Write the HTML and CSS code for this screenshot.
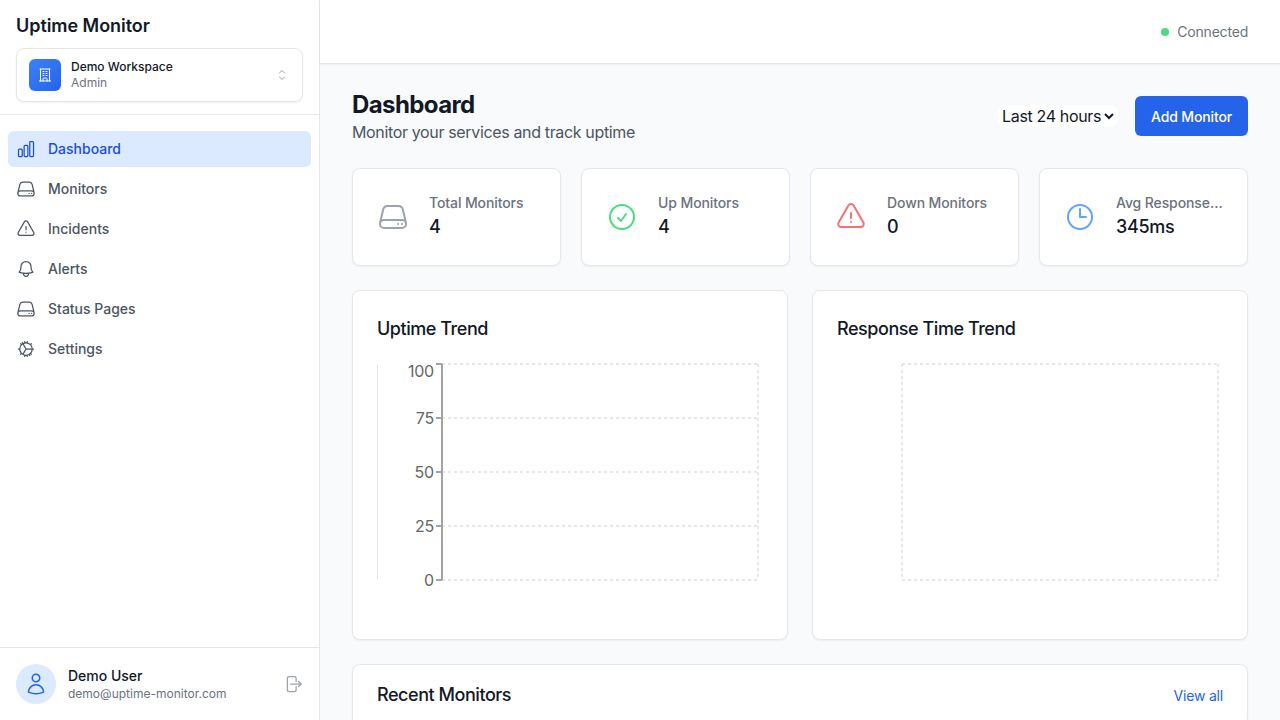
FILE: index.html
```html
<!DOCTYPE html>
<html lang="en">
<head>
    <meta charset="utf-8">
    <title>Uptime Monitor</title>
    <link rel="stylesheet" href="styles.css">
</head>
<body>

    <aside class="sidebar">
        <div class="brand">
            <h1>Uptime Monitor</h1>
            <div class="workspace">
                <span class="workspace-logo">
                    <svg class="icon-sm" viewBox="0 0 24 24"><path d="M3.75 21h16.5M4.5 3h15M5.25 3v18m13.5-18v18M9 6.75h1.5m-1.5 3h1.5m-1.5 3h1.5m3-6H15m-1.5 3H15m-1.5 3H15M9 21v-3.375c0-.621.504-1.125 1.125-1.125h3.75c.621 0 1.125.504 1.125 1.125V21"/></svg>
                </span>
                <div class="workspace-text">
                    <strong>Demo Workspace</strong>
                    <span>Admin</span>
                </div>
                <svg class="chevrons" viewBox="0 0 24 24"><path d="M8.25 15L12 18.75 15.75 15m-7.5-6L12 5.25 15.75 9"/></svg>
            </div>
        </div>

        <nav class="nav">
            <a class="nav-item active" href="#">
                <svg class="icon" viewBox="0 0 24 24"><path d="M3 13.125C3 12.504 3.504 12 4.125 12h2.25c.621 0 1.125.504 1.125 1.125v6.75C7.5 20.496 6.996 21 6.375 21h-2.25A1.125 1.125 0 013 19.875v-6.75zM9.75 8.625c0-.621.504-1.125 1.125-1.125h2.25c.621 0 1.125.504 1.125 1.125v11.25c0 .621-.504 1.125-1.125 1.125h-2.25a1.125 1.125 0 01-1.125-1.125V8.625zM16.5 4.125c0-.621.504-1.125 1.125-1.125h2.25C20.496 3 21 3.504 21 4.125v15.75c0 .621-.504 1.125-1.125 1.125h-2.25a1.125 1.125 0 01-1.125-1.125V4.125z"/></svg>
                Dashboard
            </a>
            <a class="nav-item" href="#">
                <svg class="icon" viewBox="0 0 24 24"><path d="M21.75 17.25v-.228a4.5 4.5 0 00-.12-1.03l-2.268-9.64a3.375 3.375 0 00-3.285-2.602H7.923a3.375 3.375 0 00-3.285 2.602l-2.268 9.64a4.5 4.5 0 00-.12 1.03v.228m19.5 0a3 3 0 01-3 3H5.25a3 3 0 01-3-3m19.5 0a3 3 0 00-3-3H5.25a3 3 0 00-3 3m16.5 0h.008v.008h-.008v-.008zm-3 0h.008v.008h-.008v-.008z"/></svg>
                Monitors
            </a>
            <a class="nav-item" href="#">
                <svg class="icon" viewBox="0 0 24 24"><path d="M12 9v3.75m-9.303 3.376c-.866 1.5.217 3.374 1.948 3.374h14.71c1.73 0 2.813-1.874 1.948-3.374L13.949 3.378c-.866-1.5-3.032-1.5-3.898 0L2.697 16.126zM12 15.75h.007v.008H12v-.008z"/></svg>
                Incidents
            </a>
            <a class="nav-item" href="#">
                <svg class="icon" viewBox="0 0 24 24"><path d="M14.857 17.082a23.848 23.848 0 005.454-1.31A8.967 8.967 0 0118 9.75v-.7V9A6 6 0 006 9v.75a8.967 8.967 0 01-2.312 6.022c1.733.64 3.56 1.085 5.455 1.31m5.714 0a24.255 24.255 0 01-5.714 0m5.714 0a3 3 0 11-5.714 0"/></svg>
                Alerts
            </a>
            <a class="nav-item" href="#">
                <svg class="icon" viewBox="0 0 24 24"><path d="M21.75 17.25v-.228a4.5 4.5 0 00-.12-1.03l-2.268-9.64a3.375 3.375 0 00-3.285-2.602H7.923a3.375 3.375 0 00-3.285 2.602l-2.268 9.64a4.5 4.5 0 00-.12 1.03v.228m19.5 0a3 3 0 01-3 3H5.25a3 3 0 01-3-3m19.5 0a3 3 0 00-3-3H5.25a3 3 0 00-3 3m16.5 0h.008v.008h-.008v-.008zm-3 0h.008v.008h-.008v-.008z"/></svg>
                Status Pages
            </a>
            <a class="nav-item" href="#">
                <svg class="icon" viewBox="0 0 24 24"><path d="M4.5 12a7.5 7.5 0 0015 0m-15 0a7.5 7.5 0 1115 0m-15 0H3m16.5 0H21m-9 0l-3.75-6.495M12 12l-3.75 6.495M12 12h7.5M7.5 4.205l.75 1.3m7.5 12.99l.75 1.3M5.636 5.636l1.06 1.06m10.607 10.607l1.06 1.06m-12.727 0l1.06-1.06M17.303 6.697l1.06-1.06M10.438 3.137l.26 1.477m2.604 14.772l.26 1.477m0-17.726l-.26 1.477m-2.604 14.772l-.26 1.477"/></svg>
                Settings
            </a>
        </nav>

        <div class="user">
            <span class="avatar">
                <svg class="icon-md" viewBox="0 0 24 24"><path d="M15.75 6a3.75 3.75 0 11-7.5 0 3.75 3.75 0 017.5 0zM4.501 20.118a7.5 7.5 0 0114.998 0A17.933 17.933 0 0112 21.75c-2.676 0-5.216-.584-7.499-1.632z"/></svg>
            </span>
            <div class="user-text">
                <strong>Demo User</strong>
                <span>demo@uptime-monitor.com</span>
            </div>
            <svg class="icon logout" viewBox="0 0 24 24"><path d="M15.75 9V5.25A2.25 2.25 0 0013.5 3h-6a2.25 2.25 0 00-2.25 2.25v13.5A2.25 2.25 0 007.5 21h6a2.25 2.25 0 002.25-2.25V15m3 0l3-3m0 0l-3-3m3 3H9"/></svg>
        </div>
    </aside>

    <div class="content">
        <header class="topbar">
            <span class="dot"></span>
            <span>Connected</span>
        </header>

        <main class="main">
            <div class="page-head">
                <div>
                    <h2>Dashboard</h2>
                    <p>Monitor your services and track uptime</p>
                </div>
                <div class="page-actions">
                    <select class="range">
                        <option>Last 24 hours</option>
                        <option>Last 7 days</option>
                        <option>Last 30 days</option>
                    </select>
                    <button class="primary">Add Monitor</button>
                </div>
            </div>

            <section class="stats">
                <div class="card stat">
                    <svg class="stat-icon gray" viewBox="0 0 24 24"><path d="M21.75 17.25v-.228a4.5 4.5 0 00-.12-1.03l-2.268-9.64a3.375 3.375 0 00-3.285-2.602H7.923a3.375 3.375 0 00-3.285 2.602l-2.268 9.64a4.5 4.5 0 00-.12 1.03v.228m19.5 0a3 3 0 01-3 3H5.25a3 3 0 01-3-3m19.5 0a3 3 0 00-3-3H5.25a3 3 0 00-3 3m16.5 0h.008v.008h-.008v-.008zm-3 0h.008v.008h-.008v-.008z"/></svg>
                    <div class="stat-text">
                        <span class="stat-label">Total Monitors</span>
                        <span class="stat-value">4</span>
                    </div>
                </div>
                <div class="card stat">
                    <svg class="stat-icon green" viewBox="0 0 24 24"><path d="M9 12.75L11.25 15 15 9.75M21 12a9 9 0 11-18 0 9 9 0 0118 0z"/></svg>
                    <div class="stat-text">
                        <span class="stat-label">Up Monitors</span>
                        <span class="stat-value">4</span>
                    </div>
                </div>
                <div class="card stat">
                    <svg class="stat-icon red" viewBox="0 0 24 24"><path d="M12 9v3.75m-9.303 3.376c-.866 1.5.217 3.374 1.948 3.374h14.71c1.73 0 2.813-1.874 1.948-3.374L13.949 3.378c-.866-1.5-3.032-1.5-3.898 0L2.697 16.126zM12 15.75h.007v.008H12v-.008z"/></svg>
                    <div class="stat-text">
                        <span class="stat-label">Down Monitors</span>
                        <span class="stat-value">0</span>
                    </div>
                </div>
                <div class="card stat">
                    <svg class="stat-icon blue" viewBox="0 0 24 24"><path d="M12 6v6h4.5m4.5 0a9 9 0 11-18 0 9 9 0 0118 0z"/></svg>
                    <div class="stat-text">
                        <span class="stat-label">Avg Response Time</span>
                        <span class="stat-value">345ms</span>
                    </div>
                </div>
            </section>

            <section class="charts">
                <div class="card chart-card">
                    <h3>Uptime Trend</h3>
                    <svg class="chart" viewBox="0 0 386 256">
                        <line class="edge" x1="0.5" y1="5" x2="0.5" y2="221"/>
                        <g class="grid">
                            <line x1="65" y1="5" x2="381" y2="5"/>
                            <line x1="65" y1="59" x2="381" y2="59"/>
                            <line x1="65" y1="113" x2="381" y2="113"/>
                            <line x1="65" y1="167" x2="381" y2="167"/>
                            <line x1="65" y1="221" x2="381" y2="221"/>
                            <line x1="65" y1="5" x2="65" y2="221"/>
                            <line x1="381" y1="5" x2="381" y2="221"/>
                        </g>
                        <g class="axis">
                            <line x1="65" y1="5" x2="65" y2="221"/>
                            <line x1="59" y1="5" x2="65" y2="5"/>
                            <line x1="59" y1="59" x2="65" y2="59"/>
                            <line x1="59" y1="113" x2="65" y2="113"/>
                            <line x1="59" y1="167" x2="65" y2="167"/>
                            <line x1="59" y1="221" x2="65" y2="221"/>
                        </g>
                        <g class="ticks">
                            <text x="57" y="18">100</text>
                            <text x="57" y="65">75</text>
                            <text x="57" y="119">50</text>
                            <text x="57" y="173">25</text>
                            <text x="57" y="227">0</text>
                        </g>
                    </svg>
                </div>
                <div class="card chart-card">
                    <h3>Response Time Trend</h3>
                    <svg class="chart" viewBox="0 0 386 256">
                        <g class="grid">
                            <line x1="65" y1="5" x2="381" y2="5"/>
                            <line x1="65" y1="221" x2="381" y2="221"/>
                            <line x1="65" y1="5" x2="65" y2="221"/>
                            <line x1="381" y1="5" x2="381" y2="221"/>
                        </g>
                    </svg>
                </div>
            </section>

            <section class="card recent">
                <div class="recent-head">
                    <h3>Recent Monitors</h3>
                    <a href="#">View all</a>
                </div>
            </section>
        </main>
    </div>

</body>
</html>
```

FILE: styles.css
```css
* {
    box-sizing: border-box;
}

body {
    margin: 0;
    height: 100vh;
    display: flex;
    overflow: hidden;
    font-family: Inter, "Liberation Sans", sans-serif;
    color: #111827;
    background-color: #f9fafb;
}

svg {
    fill: none;
    stroke: currentColor;
    stroke-width: 1.5;
    stroke-linecap: round;
    stroke-linejoin: round;
    flex-shrink: 0;
}

h1, h2, h3, p {
    margin: 0;
}

a {
    text-decoration: none;
}

.icon {
    width: 20px;
    height: 20px;
}

.icon-sm {
    width: 16px;
    height: 16px;
}

.icon-md {
    width: 24px;
    height: 24px;
}

/* sidebar */
.sidebar {
    width: 320px;
    flex-shrink: 0;
    display: flex;
    flex-direction: column;
    background-color: #fff;
    border-right: 1px solid #e5e7eb;
}

.brand {
    padding: 12px 16px;
    border-bottom: 1px solid #e5e7eb;
}

.brand h1 {
    font-size: 18px;
    line-height: 28px;
    font-weight: 600;
    margin-bottom: 8px;
    letter-spacing: -0.05px;
}

.workspace {
    display: flex;
    align-items: center;
    gap: 10px;
    padding: 10px 12px;
    background-color: #fff;
    border: 1px solid #e5e7eb;
    border-radius: 8px;
    box-shadow: 0 1px 2px rgba(0, 0, 0, 0.05);
}

.workspace-logo {
    width: 32px;
    height: 32px;
    display: flex;
    align-items: center;
    justify-content: center;
    border-radius: 6px;
    color: #fff;
    background: linear-gradient(135deg, #3b82f6, #2563eb);
}

.workspace-text {
    flex: 1;
    display: flex;
    flex-direction: column;
    font-size: 12px;
    line-height: 16px;
}

.workspace-text strong {
    font-weight: 500;
}

.workspace-text span {
    color: #6b7280;
}

.chevrons {
    width: 16px;
    height: 16px;
    color: #9ca3af;
}

.nav {
    flex: 1;
    display: flex;
    flex-direction: column;
    gap: 4px;
    padding: 16px 8px;
}

.nav-item {
    display: flex;
    align-items: center;
    gap: 12px;
    padding: 8px;
    border-radius: 6px;
    font-size: 14px;
    line-height: 20px;
    font-weight: 500;
    color: #4b5563;
}

.nav-item.active {
    color: #1d4ed8;
    background-color: #dbeafe;
}

.user {
    display: flex;
    align-items: center;
    gap: 12px;
    padding: 16px;
    border-top: 1px solid #e5e7eb;
}

.avatar {
    width: 40px;
    height: 40px;
    display: flex;
    align-items: center;
    justify-content: center;
    border-radius: 50%;
    color: #2563eb;
    background-color: #dbeafe;
}

.user-text {
    flex: 1;
    display: flex;
    flex-direction: column;
}

.user-text strong {
    font-size: 14px;
    line-height: 20px;
    font-weight: 500;
}

.user-text span {
    font-size: 12px;
    line-height: 16px;
    color: #6b7280;
}

.logout {
    color: #9ca3af;
}

/* right side */
.content {
    flex: 1;
    min-width: 0;
    display: flex;
    flex-direction: column;
}

.topbar {
    height: 64px;
    flex-shrink: 0;
    display: flex;
    align-items: center;
    justify-content: flex-end;
    gap: 8px;
    padding: 0 32px;
    font-size: 14px;
    letter-spacing: -0.2px;
    color: #6b7280;
    background-color: #fff;
    border-bottom: 1px solid #e5e7eb;
    box-shadow: 0 1px 2px rgba(0, 0, 0, 0.05);
}

.dot {
    width: 8px;
    height: 8px;
    border-radius: 50%;
    background-color: #4ade80;
}

.main {
    flex: 1;
    padding: 24px 32px;
}

.page-head {
    display: flex;
    align-items: center;
    justify-content: space-between;
    margin-bottom: 24px;
}

.page-head h2 {
    font-size: 24px;
    line-height: 32px;
    font-weight: 700;
    letter-spacing: -0.6px;
    padding-top: 1px;
    margin-bottom: -1px;
}

.page-head p {
    font-size: 16px;
    line-height: 24px;
    letter-spacing: -0.35px;
    color: #4b5563;
}

.page-actions {
    display: flex;
    align-items: center;
    gap: 18px;
}

.range {
    font-family: inherit;
    font-size: 16px;
    letter-spacing: -0.35px;
    color: #111827;
    border: none;
    border-radius: 6px;
    background-color: #fff;
}

.primary {
    height: 40px;
    padding: 0 16px;
    border: none;
    border-radius: 6px;
    font-family: inherit;
    font-size: 14px;
    font-weight: 500;
    letter-spacing: -0.15px;
    color: #fff;
    background-color: #2563eb;
    cursor: pointer;
}

.card {
    background-color: #fff;
    border: 1px solid #e5e7eb;
    border-radius: 8px;
    box-shadow: 0 1px 2px rgba(0, 0, 0, 0.05);
}

.stats {
    display: grid;
    grid-template-columns: repeat(4, minmax(0, 1fr));
    gap: 20px;
    margin-bottom: 24px;
}

.stat {
    display: flex;
    align-items: center;
    gap: 20px;
    padding: 24px;
}

.stat-icon {
    width: 32px;
    height: 32px;
}

.gray { color: #9ca3af; }
.green { color: #4ade80; }
.red { color: #f87171; }
.blue { color: #60a5fa; }

.stat-text {
    min-width: 0;
    display: flex;
    flex-direction: column;
}

.stat-label {
    font-size: 14px;
    line-height: 20px;
    font-weight: 500;
    letter-spacing: -0.1px;
    color: #6b7280;
    white-space: nowrap;
    overflow: hidden;
    text-overflow: ellipsis;
}

.stat-value {
    font-size: 18px;
    line-height: 28px;
    font-weight: 500;
    letter-spacing: -0.3px;
}

.charts {
    display: grid;
    grid-template-columns: repeat(2, minmax(0, 1fr));
    gap: 24px;
    margin-bottom: 24px;
}

.chart-card {
    padding: 24px;
}

.chart-card h3,
.recent h3 {
    font-size: 18px;
    line-height: 28px;
    font-weight: 500;
    letter-spacing: -0.45px;
}

.chart-card h3 {
    margin-bottom: 16px;
}

.chart {
    display: block;
    width: 386px;
    height: 256px;
    stroke-linecap: butt;
}

.edge {
    stroke: #e5e7eb;
    stroke-width: 1;
}

.grid line {
    stroke: #e5e7eb;
    stroke-width: 2;
    stroke-dasharray: 3 3;
}

.axis line {
    stroke: #a3a3a3;
    stroke-width: 2;
}

.ticks text {
    font-size: 16px;
    letter-spacing: -0.2px;
    fill: #666;
    stroke: none;
    text-anchor: end;
}

.recent {
    padding: 16px 24px;
}

.recent-head {
    display: flex;
    align-items: center;
    justify-content: space-between;
}

.recent-head a {
    font-size: 14px;
    letter-spacing: -0.2px;
    color: #2563eb;
}
```
